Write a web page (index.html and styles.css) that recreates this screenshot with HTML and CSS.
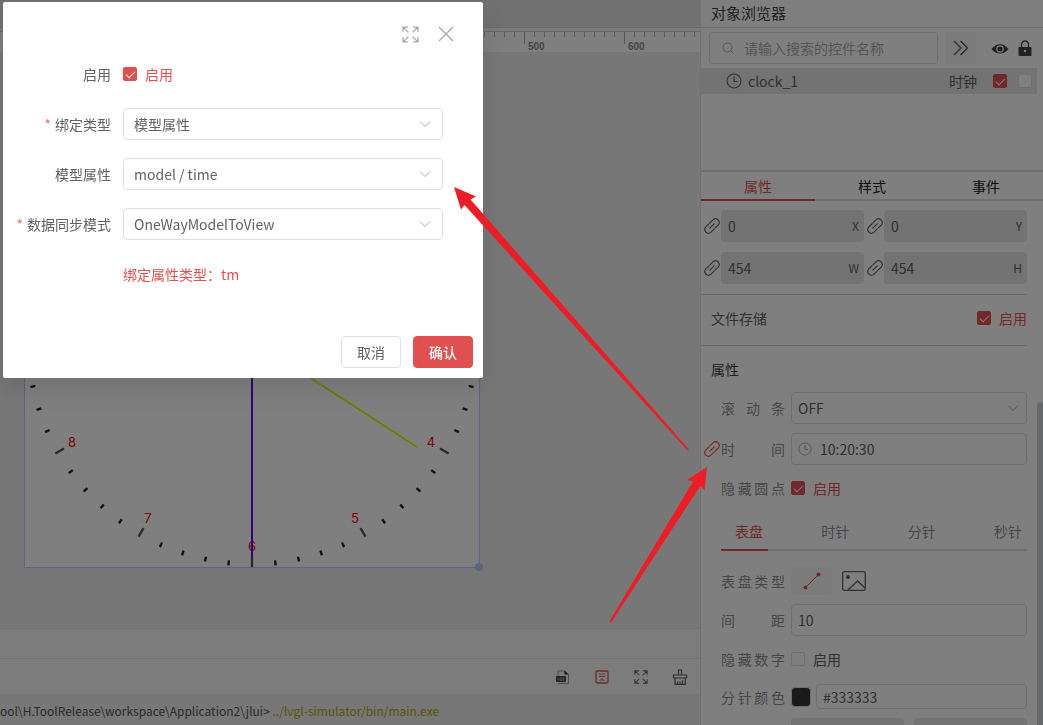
FILE: index.html
```html
<!DOCTYPE html>
<html lang="zh-CN">
<head>
  <meta charset="UTF-8" />
  <meta name="viewport" content="width=device-width, initial-scale=1.0" />
  <title>对象浏览器</title>
  <link rel="stylesheet" href="styles.css">
</head>
<body>

  <!-- Shared icons -->
  <svg class="sprite" aria-hidden="true">
    <symbol id="i-link" viewBox="0 0 16 16">
      <g fill="none" stroke="currentColor" stroke-width="1.100" stroke-linecap="round" stroke-linejoin="round">
        <path d="M5.800 10.200 10.200 5.800" />
        <path d="M5.700 5.100 9.200 1.600a3.700 3.700 0 0 1 5.200 5.200L11.200 10" />
        <path d="M4.800 6 1.600 9.200a3.700 3.700 0 0 0 5.200 5.200L10.300 10.900" />
      </g>
    </symbol>
    <symbol id="i-clock" viewBox="0 0 16 16">
      <g fill="none" stroke="currentColor" stroke-width="1.1">
        <circle cx="8" cy="8" r="7" />
        <path d="M8 3.5V8.5H11.5" />
      </g>
    </symbol>
    <symbol id="i-down" viewBox="0 0 12 12">
      <path d="M1 3.5 6 8.5 11 3.5" fill="none" stroke="currentColor" />
    </symbol>
    <symbol id="i-full" viewBox="0 0 16 16">
      <path d="M1 5.500V1H5.500M1 1 6 6M10.500 1H15V5.500M15 1 10 6M1 10.500V15H5.500M1 15 6 10M15 10.500V15H10.500M15 15 10 10" fill="none" stroke="currentColor" stroke-width="1.200" />
    </symbol>
  </svg>

  <div class="app">
    <main class="editor">
      <div class="topbar"></div>
      <div class="ruler">
        <span>0</span><span>100</span><span>200</span><span>300</span><span>400</span><span>500</span><span>600</span>
      </div>

      <div class="canvas">
        <svg class="clock" width="462" height="462" viewBox="0 0 462 462">
          <rect x="0.5" y="0.5" width="455" height="455" fill="#fff" stroke="#b4ccff" />
          <circle cx="228" cy="228" r="224" pathLength="600" fill="none" stroke="#222" stroke-width="5" stroke-dasharray="0 9.5 1 9 1 9 1 9 1 9.5" />
          <circle cx="228" cy="228" r="222" pathLength="600" fill="none" stroke="#555" stroke-width="10" stroke-dasharray="1 49" stroke-dashoffset="0.5" />
          <g class="digits">
            <text x="407" y="335">4</text>
            <text x="331" y="411">5</text>
            <text x="228" y="439">6</text>
            <text x="124" y="411">7</text>
            <text x="48" y="335">8</text>
          </g>
          <path d="M228 228 393 335" stroke="#e2f500" stroke-width="2" />
          <path d="M228 228V445" stroke="#6a00ff" stroke-width="2" />
          <circle cx="455" cy="455" r="4" fill="#b4ccff" />
        </svg>
      </div>

      <div class="dock"></div>
      <div class="toolbar">
        <button aria-label="日志文件">
          <svg width="16" height="16" viewBox="0 0 16 16">
            <path d="M3 7V2H10L13.500 5.500V14.500H11" fill="none" stroke="#999" />
            <path d="M9.500 1.500 13.500 5.500H9.500Z" fill="#333" />
            <rect x="1" y="7" width="10" height="6" rx="1" fill="#444" />
            <path d="M3 9V11.500M5 9H7V11.500H5ZM9.500 9H8.500V11.500H9.500" fill="none" stroke="#bbb" stroke-width="0.7" />
            <path d="M3 14.500H12" stroke="#999" />
          </svg>
        </button>
        <button class="red" aria-label="滚动到底部">
          <svg width="16" height="16" viewBox="0 0 16 16" fill="none" stroke="currentColor">
            <rect x="2" y="2" width="12" height="12" rx="1.500" stroke-width="1.300" />
            <path d="M5 5H11M5 7.500H11" stroke-width="0.900" />
            <path d="M5.500 12 8 9.500 10.500 12M8 10.500V12" />
          </svg>
        </button>
        <button aria-label="全屏">
          <svg width="14" height="14"><use href="#i-full" /></svg>
        </button>
        <button aria-label="清空">
          <svg width="16" height="16" viewBox="0 0 16 16" fill="none" stroke="currentColor" stroke-width="1.200">
            <path d="M6.500 6V1H9.500V6M1.500 6H14.500V9H1.500ZM3 9V15.300H13.300V9M5.500 15V12.500M8 15V12.500M10.500 15V11.500" />
          </svg>
        </button>
      </div>
      <div class="console">ool\H.ToolRelease\workspace\Application2\jlui&gt; <span>../lvgl-simulator/bin/main.exe</span></div>
    </main>

    <aside class="panel">
      <h2 class="panel-title">对象浏览器</h2>
      <div class="search-row">
        <div class="search">
          <svg width="12" height="12" viewBox="0 0 12 12" fill="none" stroke="currentColor"><circle cx="5.500" cy="5.500" r="4.500" /><path d="M9 9 11.500 11.500" /></svg>
          <input type="text" aria-label="搜索" placeholder="请输入搜索的控件名称">
        </div>
        <button class="expand" aria-label="展开">
          <svg width="16" height="16" viewBox="0 0 16 16" fill="none" stroke="currentColor" stroke-width="1.300"><path d="M1 1 8 8 1 15M7.500 1 14.500 8 7.500 15" /></svg>
        </button>
        <svg class="eye" width="18" height="18" viewBox="0 0 18 18">
          <path d="M0.500 10C5 3.500 13 3.500 17.500 10C13 16 5 16 0.500 10Z" fill="currentColor" />
          <circle cx="9" cy="10" r="3.200" fill="none" stroke="#fff" stroke-width="1.200" />
        </svg>
        <svg class="lock" width="14" height="16" viewBox="0 0 14 16">
          <path d="M3.500 7V4.500a3.500 3.500 0 0 1 7 0V7" fill="none" stroke="currentColor" stroke-width="1.300" />
          <rect x="0.500" y="7" width="13" height="9" rx="1" fill="currentColor" />
          <circle cx="7" cy="11" r="1.200" fill="#fff" />
        </svg>
      </div>
      <div class="tree">
        <div class="tree-row">
          <svg width="16" height="16"><use href="#i-clock" /></svg>
          <span class="tree-name">clock_1</span>
          <span>时钟</span>
          <input type="checkbox" aria-label="显示" checked>
          <input type="checkbox" aria-label="锁定">
        </div>
      </div>

      <div class="tabs">
        <button class="active">属性</button>
        <button>样式</button>
        <button>事件</button>
      </div>

      <div class="props">
        <div class="geometry">
          <svg class="link" width="16" height="16"><use href="#i-link" /></svg>
          <label class="num"><input type="text" value="0" disabled><span>X</span></label>
          <svg class="link" width="16" height="16"><use href="#i-link" /></svg>
          <label class="num"><input type="text" value="0" disabled><span>Y</span></label>
          <svg class="link" width="16" height="16"><use href="#i-link" /></svg>
          <label class="num"><input type="text" value="454" disabled><span>W</span></label>
          <svg class="link" width="16" height="16"><use href="#i-link" /></svg>
          <label class="num"><input type="text" value="454" disabled><span>H</span></label>
        </div>

        <div class="storage">
          <span>文件存储</span>
          <label class="check"><input type="checkbox" checked>启用</label>
        </div>

        <h3 class="group-title">属性</h3>
        <div class="row">
          <label class="name" for="scrollbar">滚动条</label>
          <div class="select">
            <select id="scrollbar"><option>OFF</option></select>
            <svg width="12" height="12"><use href="#i-down" /></svg>
          </div>
        </div>
        <div class="row">
          <svg class="link red" width="16" height="16"><use href="#i-link" /></svg>
          <label class="name" for="time">时间</label>
          <div class="time">
            <svg width="14" height="14"><use href="#i-clock" /></svg>
            <input id="time" type="text" value="10:20:30">
          </div>
        </div>
        <div class="row short">
          <span class="name">隐藏圆点</span>
          <label class="check"><input type="checkbox" checked>启用</label>
        </div>

        <div class="subtabs">
          <button class="active">表盘</button>
          <button>时针</button>
          <button>分针</button>
          <button>秒针</button>
        </div>

        <div class="row kind">
          <span class="name">表盘类型</span>
          <button class="kind-line" aria-label="线条">
            <svg width="18" height="18" viewBox="0 0 18 18"><path d="M2.500 15.500 15.500 2.500" stroke="currentColor" /><circle cx="2.500" cy="15.500" r="2" fill="currentColor" /><circle cx="15.500" cy="2.500" r="2" fill="currentColor" /></svg>
          </button>
          <button class="kind-image" aria-label="图片">
            <svg width="24" height="20" viewBox="0 0 24 20" fill="none" stroke="currentColor" stroke-width="1.300"><rect x="0.700" y="0.700" width="22.600" height="18.600" rx="1.500" /><path d="M6 19 15.500 10 23 17" /><circle cx="6" cy="6" r="1.300" fill="currentColor" /></svg>
          </button>
        </div>
        <div class="row">
          <label class="name" for="gap">间距</label>
          <input id="gap" class="text" type="text" value="10">
        </div>
        <div class="row short">
          <span class="name">隐藏数字</span>
          <label class="check"><input type="checkbox">启用</label>
        </div>
        <div class="row color">
          <label class="name" for="color">分针颜色</label>
          <button class="swatch" aria-label="选择颜色"></button>
          <input id="color" class="text" type="text" value="#333333">
        </div>
        <div class="row pair">
          <span class="name"></span>
          <input class="text" type="text" aria-label="宽度" disabled>
          <input class="text" type="text" aria-label="长度" disabled>
        </div>
      </div>
      <div class="scroll-thumb"></div>
    </aside>
  </div>

  <!-- Binding dialog -->
  <div class="overlay">
    <form class="dialog" role="dialog" aria-label="绑定">
      <div class="dialog-head">
        <button type="button" aria-label="全屏"><svg width="17" height="17"><use href="#i-full" /></svg></button>
        <button type="button" aria-label="关闭"><svg width="18" height="18" viewBox="0 0 18 18"><path d="M2 2 16 16M16 2 2 16" stroke="currentColor" stroke-width="1.300" /></svg></button>
      </div>
      <div class="dialog-body">
        <label for="enable">启用</label>
        <label class="check"><input id="enable" type="checkbox" checked>启用</label>

        <label class="required" for="bind">绑定类型</label>
        <div class="select">
          <select id="bind"><option>模型属性</option></select>
          <svg width="12" height="12"><use href="#i-down" /></svg>
        </div>

        <label for="model">模型属性</label>
        <div class="select">
          <select id="model"><option>model / time</option></select>
          <svg width="12" height="12"><use href="#i-down" /></svg>
        </div>

        <label class="required" for="sync">数据同步模式</label>
        <div class="select">
          <select id="sync"><option>OneWayModelToView</option></select>
          <svg width="12" height="12"><use href="#i-down" /></svg>
        </div>

        <p class="hint">绑定属性类型：tm</p>
      </div>
      <div class="dialog-foot">
        <button type="button" class="btn">取消</button>
        <button type="button" class="btn primary">确认</button>
      </div>
    </form>
  </div>

  <!-- Annotation arrows -->
  <svg class="arrows" width="1043" height="725" viewBox="0 0 1043 725" fill="#ee1c25" aria-hidden="true">
    <path d="M454 187 476 196.500 470.500 199.500 689 449.500 687.500 450.500 464.500 205 461 209.500Z" />
    <path d="M707 467 704.500 490.500 700.500 485.700 611 622.700 609.300 621.500 693 481.500 687 480Z" />
  </svg>

</body>
</html>
```

FILE: styles.css
```css
* {
  box-sizing: border-box;
}
body {
  margin: 0;
  font-family: "Noto Sans CJK SC", sans-serif;
  font-size: 14px;
  line-height: 20px;
  color: #606266;
  overflow: hidden;
}
button, input, select {
  font: inherit;
  color: inherit;
  margin: 0;
}
button {
  display: flex;
  align-items: center;
  justify-content: center;
  padding: 0;
  border: none;
  background: none;
  cursor: pointer;
}
svg {
  display: block;
  flex: none;
}
.sprite {
  position: absolute;
  width: 0;
  height: 0;
}
.red {
  color: #e15050;
}

/* Page frame: editor on the left, properties on the right */
.app {
  display: grid;
  grid-template-columns: minmax(0, 1fr) 343px;
  height: 100vh;
}
.editor {
  display: flex;
  flex-direction: column;
  overflow: hidden;
  background: #f8f8f8;
}
.topbar {
  height: 28px;
  flex: none;
  background: #e2e2e2;
  border-bottom: 1px solid #d2d2d2;
}
.ruler {
  display: flex;
  flex: none;
  height: 21px;
  margin-top: 3px;
  padding-left: 24px;
  border-top: 1px solid #d0d0d0;
  background: #fff;
  color: #888c90;
  font: bold 10px/30px "Liberation Sans", sans-serif;
  overflow: hidden;
}
.ruler span {
  flex: none;
  width: 100px;
  padding-left: 4px;
  background:
    linear-gradient(#aaa, #aaa) 0 0 / 1px 12px no-repeat,
    repeating-linear-gradient(to right, #b4b4b4 0 1px, transparent 1px 10px) 0 0 / 100% 5px no-repeat;
}

/* Canvas with the clock widget */
.canvas {
  position: relative;
  flex: 1;
  background: #eee;
}
.clock {
  position: absolute;
  left: 24px;
  top: 60px;
}
.digits {
  fill: #ff0000;
  font: 13px Inter, sans-serif;
  text-anchor: middle;
}
.dock {
  flex: none;
  height: 30px;
  border-top: 1px solid #e4e4e4;
}
.toolbar {
  display: flex;
  flex: none;
  align-items: center;
  justify-content: flex-end;
  gap: 23px;
  height: 36px;
  padding: 0 12px;
  border-top: 1px solid #e4e4e4;
  color: #606266;
}
.toolbar button {
  width: 16px;
  height: 16px;
}
.toolbar .red {
  color: #e15050;
}
.console {
  flex: none;
  height: 31px;
  background: #eee;
  color: #555;
  font-size: 12px;
  line-height: 34px;
  white-space: nowrap;
}
.console span {
  color: #b5a812;
}

/* Right panel */
.panel {
  position: relative;
  display: flex;
  flex-direction: column;
  border-left: 1px solid #e0e0e0;
  background: #fff;
  overflow: hidden;
}
.panel-title {
  flex: none;
  height: 28px;
  margin: 0;
  padding-left: 10px;
  border-bottom: 1px solid #dcdcdc;
  color: #444;
  font-size: 15px;
  font-weight: 400;
  line-height: 26px;
}
.search-row {
  display: flex;
  flex: none;
  align-items: center;
  padding: 4px 11px 4px 8px;
  color: #444;
}
.search {
  display: flex;
  flex: 1;
  align-items: center;
  gap: 10px;
  height: 32px;
  padding: 0 12px;
  border: 1px solid #dcdfe6;
  border-radius: 4px;
  color: #a8abb2;
}
.search input {
  flex: 1;
  min-width: 0;
  padding: 0;
  border: none;
  outline: none;
  background: none;
}
.search input::placeholder {
  color: #a8abb2;
  opacity: 1;
}
.expand {
  width: 32px;
  height: 32px;
  margin: 0 14px 0 7px;
  border-radius: 4px;
  background: #f7f7f7;
  color: #555;
}
.lock {
  margin-left: 9px;
}
.tree {
  flex: none;
  height: 102px;
  padding-right: 6px;
}
.tree-row {
  display: flex;
  align-items: center;
  height: 26px;
  padding: 0 5px 0 25px;
  background: #e6e6e6;
}
.tree-name {
  flex: 1;
  padding-left: 6px;
}
.tree-row input {
  margin-left: 16px;
}
.tree-row input + input {
  margin-left: 11px;
}
.tabs {
  display: flex;
  flex: none;
  height: 31px;
  border-top: 2px solid #dadada;
}
.tabs button {
  flex: 1;
  border-bottom: 2px solid #dcdfe6;
  color: #222;
}
.tabs .active,
.subtabs .active {
  border-color: #e15050;
  color: #e15050;
}
.props {
  flex: none;
  padding: 9px 16px 0 0;
}

/* Position and size fields */
.geometry {
  display: grid;
  grid-template-columns: 20px minmax(0, 1fr) 20px minmax(0, 1fr);
  row-gap: 10px;
  padding-bottom: 10px;
  border-bottom: 1px solid #d4d4d4;
}
.link {
  align-self: center;
  justify-self: end;
  margin-right: 1px;
}
.num {
  display: flex;
  align-items: center;
  height: 32px;
  padding: 0 5px 0 7px;
  border-radius: 4px;
  background: #e6e6e6;
  font-size: 12px;
}
.num input {
  flex: 1;
  min-width: 0;
  padding: 0;
  border: none;
  background: none;
  color: #606266;
  font-size: 14px;
}
.storage {
  display: flex;
  align-items: center;
  justify-content: space-between;
  height: 51px;
  padding: 0 0 4px 10px;
  border-bottom: 1px solid #d4d4d4;
}
.group-title {
  margin: 13px 0 13px 10px;
  color: #444;
  font-size: 14px;
  font-weight: 400;
  line-height: 20px;
}

/* Property rows */
.row {
  position: relative;
  display: flex;
  align-items: center;
  height: 32px;
  margin-bottom: 9px;
  padding-left: 20px;
}
.row .link {
  position: absolute;
  left: 3px;
}
.name {
  flex: none;
  width: 64px;
  margin-right: 6px;
  color: #8c8f94;
  text-align-last: justify;
}
.row.short {
  height: 28px;
  margin-bottom: 11px;
}
.select,
.time {
  position: relative;
  display: flex;
  flex: 1;
  align-items: center;
  height: 32px;
  border: 1px solid #dcdfe6;
  border-radius: 4px;
}
.select select {
  width: 100%;
  height: 100%;
  padding: 0 30px 0 6px;
  border: none;
  outline: none;
  background: none;
  appearance: none;
}
.select svg {
  position: absolute;
  right: 7px;
  color: #a8abb2;
  pointer-events: none;
}
.time {
  gap: 8px;
  padding: 0 6px;
}
.time svg {
  color: #a8abb2;
}
.time input {
  flex: 1;
  min-width: 0;
  padding: 0;
  border: none;
  outline: none;
  background: none;
}
.text {
  flex: 1;
  min-width: 0;
  height: 100%;
  padding: 0 6px;
  border: 1px solid #dcdfe6;
  border-radius: 4px;
  background: none;
}
.text:disabled {
  border: none;
  background: #e6e6e6;
}

/* Checkboxes */
input[type="checkbox"] {
  position: relative;
  flex: none;
  width: 14px;
  height: 14px;
  border: 1px solid #dcdfe6;
  border-radius: 2px;
  background: #fff;
  appearance: none;
}
input[type="checkbox"]:checked {
  border-color: #e15050;
  background: #e15050;
}
input[type="checkbox"]:checked::after {
  content: "";
  position: absolute;
  left: 4px;
  top: 1px;
  width: 4px;
  height: 8px;
  border: solid #fff;
  border-width: 0 1px 1px 0;
  transform: rotate(45deg);
}
.check {
  display: flex;
  align-items: center;
  gap: 8px;
}
.check:has(:checked) {
  color: #e15050;
}

.subtabs {
  display: flex;
  justify-content: space-between;
  height: 38px;
  margin: 0 0 16px 20px;
  border-bottom: 2px solid #dcdfe6;
}
.subtabs button {
  height: 38px;
  padding: 0 5px;
  border-bottom: 2px solid transparent;
  color: #8c8f94;
}
.subtabs button:first-child {
  padding: 0 5px 0 14px;
}
.subtabs .active {
  border-color: #e15050;
  color: #e15050;
}
.row.kind {
  height: 28px;
}
.kind-line {
  width: 42px;
  height: 28px;
  border-radius: 4px;
  background: #f7f7f7;
  color: #e15050;
}
.kind-image {
  margin-left: 9px;
}
.row.color {
  height: 25px;
}
.swatch {
  width: 20px;
  height: 20px;
  margin-right: 5px;
  border: 1px solid #dcdfe6;
  border-radius: 4px;
  background: #333;
}
.pair .text + .text {
  margin-left: 10px;
}
.scroll-thumb {
  position: absolute;
  right: 0;
  top: 402px;
  bottom: 0;
  width: 6px;
  border-radius: 3px 3px 0 0;
  background: #cfd0d6;
}

/* Dialog */
.overlay {
  position: fixed;
  inset: 0;
  display: flex;
  align-items: flex-start;
  padding: 2px 3px;
  background: rgba(0, 0, 0, 0.5);
}
.dialog {
  width: 480px;
  padding: 20px 10px 10px;
  border-radius: 2px;
  background: #fff;
  box-shadow: 0 10px 30px rgba(0, 0, 0, 0.12);
}
.dialog-head {
  display: flex;
  justify-content: flex-end;
  gap: 18px;
  height: 24px;
  padding-right: 18px;
  color: #a3a6b5;
}
.dialog-body {
  display: grid;
  grid-template-columns: 98px 320px;
  grid-auto-rows: 32px;
  align-items: center;
  gap: 18px 12px;
  padding: 12px 0 46px;
}
.dialog-body > label:not(.check) {
  text-align: right;
}
.required::before {
  content: "*";
  margin-right: 4px;
  color: #f56c6c;
}
.dialog .select select {
  padding-left: 10px;
}
.dialog .select svg {
  right: 11px;
}
.hint {
  grid-column: 2;
  margin: 0;
  color: #e15050;
}
.dialog-foot {
  display: flex;
  justify-content: flex-end;
  gap: 12px;
}
.btn {
  width: 60px;
  height: 32px;
  border: 1px solid #dcdfe6;
  border-radius: 4px;
}
.btn.primary {
  border-color: #e15050;
  background: #e15050;
  color: #fff;
  font-weight: 500;
}

.arrows {
  position: fixed;
  left: 0;
  top: 0;
  pointer-events: none;
}
```
